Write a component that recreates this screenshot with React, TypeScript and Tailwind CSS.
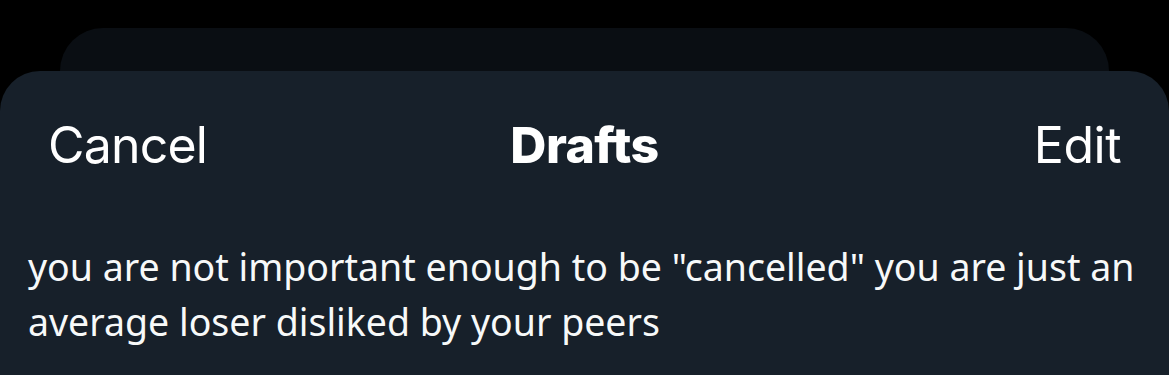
import React from "react";

const App = () => {
  return (
    <div className="w-[1169px] h-[375px] bg-black overflow-hidden pt-[28px]">
      <div className="mx-[60px] h-[43px] bg-[#0a0e13] rounded-t-[44px]" />
      <div className="h-[304px] bg-[#17202a] rounded-t-[40px] text-white">
        <div className="h-[148px] px-[48px] grid grid-cols-[1fr_auto_1fr] items-center font-['Inter',sans-serif] text-[50px]">
          <span role="button" className="justify-self-start tracking-[-0.8px]">Cancel</span>
          <span className="font-extrabold tracking-[-0.5px]">Drafts</span>
          <span role="button" className="justify-self-end tracking-[-0.5px]">Edit</span>
        </div>
        <p className="px-[28px] pt-[20px] text-[37.5px] leading-[55px] font-['Noto_Sans',sans-serif] text-[#f7f9f9]">
          you are not important enough to be "cancelled" you are just an average loser disliked by your peers
        </p>
      </div>
    </div>
  );
};

export default App;
